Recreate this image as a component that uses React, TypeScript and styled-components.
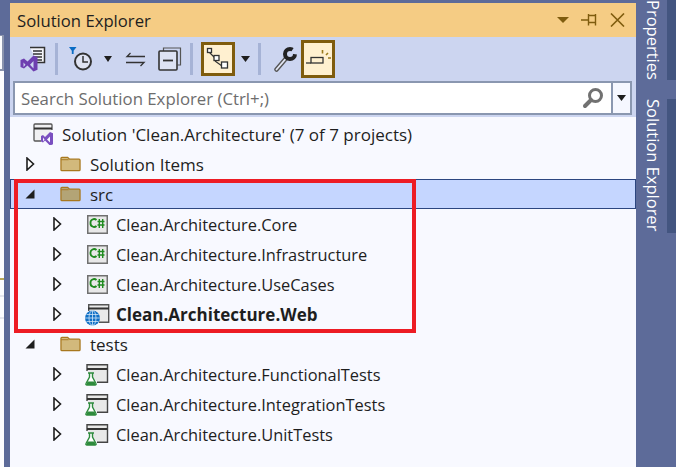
import React from "react";
import styled, { createGlobalStyle } from "styled-components";

const Global = createGlobalStyle`
  html, body { margin: 0; padding: 0; background: #5d6b99; }
  body { font-family: "Open Sans", "Liberation Sans", sans-serif; }
`;

const Frame = styled.div`
  width: 676px;
  height: 467px;
  overflow: hidden;
  display: flex;
  background: #5d6b99;
`;

const LeftStrip = styled.div`
  width: 4px;
  margin: 35px 6px 0 0;
  flex: none;
  background: #fdfdff;
  display: flex;
  flex-direction: column;
`;

const Sliver = styled.div`
  height: 36px;
  flex: none;
  box-sizing: border-box;
  background: #fbfbfd;
  border: solid #8a93ad;
  border-width: 1px 2px 2px 0;
`;

const LeftMark = styled.div<{ $top: number; $color: string }>`
  height: 2px;
  margin-top: ${(p) => p.$top}px;
  background: ${(p) => p.$color};
`;

const Panel = styled.div`
  width: 626px;
  margin-top: 3px;
  flex: none;
  display: flex;
  flex-direction: column;
  background: #f8f9ff;
`;

const TitleBar = styled.div`
  height: 34px;
  display: flex;
  align-items: center;
  padding: 0 11px 0 7px;
  background: #f5cc84;
  color: #1e1e1e;
  font-size: 16.7px;
`;

const TitleText = styled.span`
  flex: 1;
`;

const TitleIcons = styled.div`
  display: flex;
  align-items: center;
  gap: 12px;
`;

const ToolArea = styled.div`
  background: #ccd5f0;
  height: 80px;
  display: flex;
  flex-direction: column;
`;

const Toolbar = styled.div`
  height: 44px;
  display: flex;
  align-items: center;
`;

const ToolSep = styled.div<{ $before?: number; $after?: number }>`
  width: 3px;
  height: 32px;
  flex: none;
  margin: 0 ${(p) => p.$after ?? 0}px 0 ${(p) => p.$before ?? 0}px;
  background: #a6b3d6;
`;

const ToolBtn = styled.div<{ $w: number; $on?: boolean; $tall?: boolean }>`
  width: ${(p) => p.$w}px;
  height: ${(p) => (p.$tall ? 38 : 34)}px;
  box-sizing: border-box;
  display: flex;
  align-items: center;
  justify-content: center;
  flex: none;
  background: ${(p) => (p.$on ? "#fff0d0" : "transparent")};
  border: ${(p) => (p.$on ? "3px solid #7f5c0e" : "none")};
`;

const SearchBox = styled.div`
  margin: 0 4px 0 3px;
  height: 34px;
  box-sizing: border-box;
  display: flex;
  background: #fff;
  border: 2px solid #8a97b0;
`;

const SearchText = styled.div`
  flex: 1;
  display: flex;
  align-items: center;
  padding-left: 6px;
  color: #6d6d6d;
  font-size: 16.8px;
`;

const SearchIcon = styled.div`
  width: 36px;
  display: flex;
  align-items: center;
  justify-content: center;
`;

const SearchDrop = styled.div`
  width: 17px;
  display: flex;
  align-items: center;
  justify-content: center;
  background: #f5f7ff;
  border-left: 2px solid #8a97b0;
`;

const Tree = styled.div`
  padding-top: 2px;
  position: relative;
  flex: 1;
`;

const Row = styled.div<{ $selected?: boolean }>`
  height: 30px;
  box-sizing: border-box;
  display: flex;
  align-items: center;
  color: #1e1e1e;
  background: ${(p) => (p.$selected ? "#c5d6ff" : "transparent")};
  box-shadow: ${(p) => (p.$selected ? "inset 0 0 0 1px #2c4680" : "none")};
`;

const Indent = styled.div<{ $w: number }>`
  width: ${(p) => p.$w}px;
  flex: none;
`;

const Arrow = styled.div`
  width: 22px;
  height: 24px;
  display: flex;
  align-items: center;
  justify-content: center;
  flex: none;
`;

const RowIcon = styled.div<{ $w: number; $pad: number }>`
  width: ${(p) => p.$w}px;
  padding-left: ${(p) => p.$pad}px;
  box-sizing: border-box;
  display: flex;
  align-items: center;
  flex: none;
`;

const Label = styled.span<{ $bold?: boolean; $size: number }>`
  white-space: nowrap;
  font-size: ${(p) => p.$size}px;
  font-weight: ${(p) => (p.$bold ? 700 : 400)};
`;

const RedBox = styled.div`
  position: absolute;
  left: 4px;
  top: 62px;
  width: 402px;
  height: 154px;
  box-sizing: border-box;
  border: 4px solid #ed1c24;
`;

const RightStrip = styled.div`
  flex: 1;
  display: flex;
  flex-direction: column;
  gap: 19px;
`;

const SideTab = styled.div<{ $h: number }>`
  height: ${(p) => p.$h}px;
  display: flex;
  align-items: stretch;
`;

const SideLabel = styled.div`
  width: 31px;
  writing-mode: vertical-rl;
  color: #fff;
  font-size: 16.5px;
  line-height: 28px;
  white-space: nowrap;
`;

const SideEdge = styled.div`
  flex: 1;
  background: #435580;
`;

const Caret = ({ color = "#1e1e1e", w = 9 }: { color?: string; w?: number }) => (
  <svg width={w} height="6" viewBox="0 0 9 5.500" preserveAspectRatio="none">
    <path d="M0 0h9L4.500 5.500z" fill={color} />
  </svg>
);

const VsLogoDoc = () => (
  <svg width="26" height="26" viewBox="0 0 26 26" fill="none">
    <path d="M10 1.500h14.500v15H17" stroke="#333" strokeWidth="1.500" fill="#f4f5fa" />
    <path d="M13 5h9M13 8h9M13 11h9M17 14h5" stroke="#333" strokeWidth="1.500" />
    <path d="M0.500 14l3.500-1.500 3.500 3 6-6 4 1.700v12.600l-4 1.700-6-6-3.500 3-3.500-1.500zM3.500 16.500v4.500l2-2.200zM13.500 15l-3.500 3.700 3.500 3.700z" fill="#6e3fb0" fillRule="evenodd" />
  </svg>
);

const HistoryIcon = () => (
  <svg width="24" height="24" viewBox="0 0 24 24" fill="none">
    <path d="M0 0h7.500L3.700 5z" fill="#0a6cc4" />
    <path d="M3.700 4v3" stroke="#0a6cc4" strokeWidth="1.800" />
    <circle cx="14" cy="14.500" r="8" stroke="#333" strokeWidth="2" fill="#dfe3f2" />
    <path d="M14 9v6h5" stroke="#333" strokeWidth="1.500" />
  </svg>
);

const SyncIcon = () => (
  <svg width="21" height="15" viewBox="0 0 21 15" fill="none">
    <path d="M20 4.500H2l3.500-3.500M1 10.500h18l-3.500 3.500" stroke="#333" strokeWidth="1.300" />
  </svg>
);

const CollapseIcon = () => (
  <svg width="24" height="24" viewBox="0 0 24 24" fill="none">
    <path d="M5.500 4V1h17v17h-3" stroke="#555" strokeWidth="1.200" />
    <rect x="1" y="4" width="18" height="19" rx="1" fill="#dde2f3" stroke="#333" strokeWidth="1.600" />
    <path d="M5 13.500h10" stroke="#333" strokeWidth="1.800" />
  </svg>
);

const ViewsIcon = () => (
  <svg width="24" height="24" viewBox="0 0 24 24" fill="none">
    <path d="M3 5l6 6M9 14l7 5" stroke="#333" strokeWidth="1.200" />
    <rect x="1.500" y="1.500" width="4" height="4" fill="#fff" stroke="#333" strokeWidth="1.300" />
    <rect x="8" y="8.500" width="5" height="5" fill="#fff" stroke="#333" strokeWidth="1.300" />
    <rect x="15.500" y="15" width="6" height="6" fill="#fff" stroke="#333" strokeWidth="1.300" />
  </svg>
);

const WrenchIcon = () => (
  <svg width="32" height="26" viewBox="-9 0 32 26" fill="none">
    <path d="M2.500 23.500L11.500 13" stroke="#555" strokeWidth="4.500" strokeLinecap="round" />
    <path d="M2.500 23.500L11.500 13" stroke="#e4e8f6" strokeWidth="1.800" strokeLinecap="round" />
    <circle cx="16" cy="8" r="5" stroke="#222" strokeWidth="4" />
    <path d="M16 7.500L21 0h3v8.500z" fill="#ccd5f0" />
  </svg>
);

const PreviewIcon = () => (
  <svg width="26" height="20" viewBox="0 2 26 20" fill="none">
    <path d="M1 16h5" stroke="#333" strokeWidth="1.300" />
    <rect x="6" y="10.500" width="12" height="5.500" fill="#fff0d0" stroke="#333" strokeWidth="1.300" />
    <path d="M17.500 3v3.500M21 8l2-2M23 11h3" stroke="#9a7a1c" strokeWidth="1.600" />
  </svg>
);

const PinIcon = () => (
  <svg width="17" height="12" viewBox="0 0 17 12" fill="none">
    <path d="M0 6h7M7.500 0v11.500M7 1.500h8M7 8.500h8M14.500 0v11.500" stroke="#7f5c0e" strokeWidth="1.400" />
  </svg>
);

const CloseIcon = () => (
  <svg width="15" height="14" viewBox="0 0 15 14" fill="none">
    <path d="M1 0.500l13 13M14 0.500l-13 13" stroke="#7f5c0e" strokeWidth="1.600" />
  </svg>
);

const Magnifier = () => (
  <svg width="22" height="22" viewBox="0 0 22 22" fill="none">
    <circle cx="13.500" cy="8.500" r="6" stroke="#717171" strokeWidth="3" />
    <path d="M9 13l-6 6" stroke="#717171" strokeWidth="4" strokeLinecap="round" />
  </svg>
);

const Expander = ({ open }: { open?: boolean }) =>
  open ? (
    <svg width="10" height="10" viewBox="0 0 10 10">
      <path d="M9.500 0.500v9h-9z" fill="#1e1e1e" />
    </svg>
  ) : (
    <svg width="9" height="14" viewBox="0 0 9 14" fill="none">
      <path d="M1 1l6.500 6L1 13z" stroke="#1e1e1e" strokeWidth="1.600" fill="#fff" />
    </svg>
  );

const SolutionIcon = () => (
  <svg width="24" height="22" viewBox="0 0 24 22" fill="none">
    <path d="M8 18H2a1 1 0 0 1-1-1V2a1 1 0 0 1 1-1h16a1 1 0 0 1 1 1v5" stroke="#555" strokeWidth="1.300" fill="#f0f0f2" />
    <path d="M1 5.500h18" stroke="#333" strokeWidth="2" />
    <path d="M8 13l2-1 2 2 5-5 3 1.300v11l-3 1.300-5-5-2 2-2-1zM10 14.500v4l1.500-2zM17 13.500l-3 3 3 3z" fill="#7a4fc0" fillRule="evenodd" />
  </svg>
);

const FolderIcon = ({ dark }: { dark?: boolean }) => (
  <svg width="21" height="16" viewBox="0 0 22 16" fill="none">
    <path
      d="M1 2a1 1 0 0 1 1-1h6l2 2h10a1 1 0 0 1 1 1v10a1 1 0 0 1-1 1H2a1 1 0 0 1-1-1z"
      fill={dark ? "#b3a476" : "#d2b97c"}
      stroke="#a8781e"
      strokeWidth="1.300"
    />
    <path d="M1 3.500h8" stroke="#a8781e" strokeWidth="1" />
  </svg>
);

const CSharpIcon = () => (
  <svg width="21" height="19" viewBox="0 0 21 19" fill="none">
    <rect x="0.750" y="0.750" width="19.500" height="17.500" fill="#e8e8e8" stroke="#707070" strokeWidth="1.500" />
    <path d="M9.500 5a3.600 3.600 0 0 0-6 3 3.600 3.600 0 0 0 6 3" stroke="#1f8a1f" strokeWidth="1.800" />
    <path d="M12.300 4v9M15.700 4v9M10.500 6.500h7M10.500 10h7" stroke="#1f8a1f" strokeWidth="1.400" />
  </svg>
);

const WebIcon = () => (
  <svg width="25" height="23" viewBox="0 0 25 23" fill="none">
    <path d="M4 8V2h20v17H14" fill="#eaeaea" />
    <path d="M3.700 8V1.700h20v17.500H14" stroke="#555" strokeWidth="1.400" />
    <path d="M3 5.500h21" stroke="#333" strokeWidth="2" />
    <circle cx="7.500" cy="15" r="7.500" fill="#0f6fc6" />
    <path d="M0 15h15M7.500 7.500v15M1.500 11.500h12M1.500 18.500h12" stroke="#cfe4f8" strokeWidth="0.800" />
    <ellipse cx="7.500" cy="15" rx="3.500" ry="7.500" stroke="#cfe4f8" strokeWidth="0.800" />
  </svg>
);

const TestIcon = () => (
  <svg width="24" height="23" viewBox="0 0 24 23" fill="none">
    <path d="M2 8V1.700h20.500v17H12" fill="#e8e8e8" />
    <path d="M2 8V1.700h20.500v17.500H12" stroke="#444" strokeWidth="1.400" />
    <path d="M2 6h20" stroke="#333" strokeWidth="2" />
    <path d="M3 10h6M4.500 10v4L1 20.500a1 1 0 0 0 1 1.500h8a1 1 0 0 0 1-1.500L7.500 14v-4" fill="#fff" stroke="#2e8b3d" strokeWidth="1.400" />
    <path d="M2.500 18.500h7l1.300 3.500H1.200z" fill="#2e8b3d" />
  </svg>
);

type Item = {
  label: string;
  kind: "solution" | "folder" | "cs" | "web" | "test";
  open?: boolean;
  selected?: boolean;
  bold?: boolean;
};

const items: Item[] = [
  { label: "Solution 'Clean.Architecture' (7 of 7 projects)", kind: "solution" },
  { label: "Solution Items", kind: "folder" },
  { label: "src", kind: "folder", open: true, selected: true },
  { label: "Clean.Architecture.Core", kind: "cs" },
  { label: "Clean.Architecture.Infrastructure", kind: "cs" },
  { label: "Clean.Architecture.UseCases", kind: "cs" },
  { label: "Clean.Architecture.Web", kind: "web", bold: true },
  { label: "tests", kind: "folder", open: true },
  { label: "Clean.Architecture.FunctionalTests", kind: "test" },
  { label: "Clean.Architecture.IntegrationTests", kind: "test" },
  { label: "Clean.Architecture.UnitTests", kind: "test" },
];

const iconFor = (it: Item) => {
  if (it.kind === "solution") return <SolutionIcon />;
  if (it.kind === "folder") return <FolderIcon dark={it.selected} />;
  if (it.kind === "cs") return <CSharpIcon />;
  if (it.kind === "web") return <WebIcon />;
  return <TestIcon />;
};

const TreeRow = ({ it }: { it: Item }) => {
  const isTop = it.kind === "solution" || it.kind === "folder";
  const size = isTop || it.bold ? 17 : 16.4;
  if (it.kind === "solution") {
    return (
      <Row>
        <Indent $w={23} />
        <RowIcon $w={29} $pad={0}>{iconFor(it)}</RowIcon>
        <Label $size={size}>{it.label}</Label>
      </Row>
    );
  }
  return (
    <Row $selected={it.selected}>
      <Indent $w={isTop ? 9 : 36} />
      <Arrow>
        <Expander open={it.open} />
      </Arrow>
      <RowIcon $w={isTop ? 49 : 48} $pad={isTop ? 19 : it.kind === "cs" ? 19 : 17}>
        {iconFor(it)}
      </RowIcon>
      <Label $size={size} $bold={it.bold}>{it.label}</Label>
    </Row>
  );
};

export default function App() {
  return (
    <Frame>
      <Global />
      <LeftStrip>
        <Sliver />
        <LeftMark $top={207} $color="#b9a95a" />
        <LeftMark $top={15} $color="#e6e7ee" />
        <LeftMark $top={20} $color="#e6e7ee" />
      </LeftStrip>
      <Panel>
        <TitleBar>
          <TitleText>Solution Explorer</TitleText>
          <TitleIcons>
            <Caret color="#7f5c0e" w={12} />
            <PinIcon />
            <CloseIcon />
          </TitleIcons>
        </TitleBar>
        <ToolArea>
          <Toolbar>
            <ToolBtn $w={45}><VsLogoDoc /></ToolBtn>
            <ToolSep />
            <ToolBtn $w={46}><HistoryIcon /></ToolBtn>
            <ToolBtn $w={8}><Caret /></ToolBtn>
            <ToolBtn $w={46}><SyncIcon /></ToolBtn>
            <ToolBtn $w={24}><CollapseIcon /></ToolBtn>
            <ToolSep $before={8} $after={8} />
            <ToolBtn $w={34} $on><ViewsIcon /></ToolBtn>
            <ToolBtn $w={20}><Caret /></ToolBtn>
            <ToolSep $before={3} />
            <ToolBtn $w={40}><WrenchIcon /></ToolBtn>
            <ToolBtn $w={34} $on $tall><PreviewIcon /></ToolBtn>
          </Toolbar>
          <SearchBox>
            <SearchText>Search Solution Explorer (Ctrl+;)</SearchText>
            <SearchIcon><Magnifier /></SearchIcon>
            <SearchDrop><Caret /></SearchDrop>
          </SearchBox>
        </ToolArea>
        <Tree>
          {items.map((it) => (
            <TreeRow key={it.label} it={it} />
          ))}
          <RedBox />
        </Tree>
      </Panel>
      <RightStrip>
        <SideTab $h={80}>
          <SideLabel>Properties</SideLabel>
          <SideEdge />
        </SideTab>
        <SideTab $h={134}>
          <SideLabel>Solution Explorer</SideLabel>
          <SideEdge />
        </SideTab>
      </RightStrip>
    </Frame>
  );
}
